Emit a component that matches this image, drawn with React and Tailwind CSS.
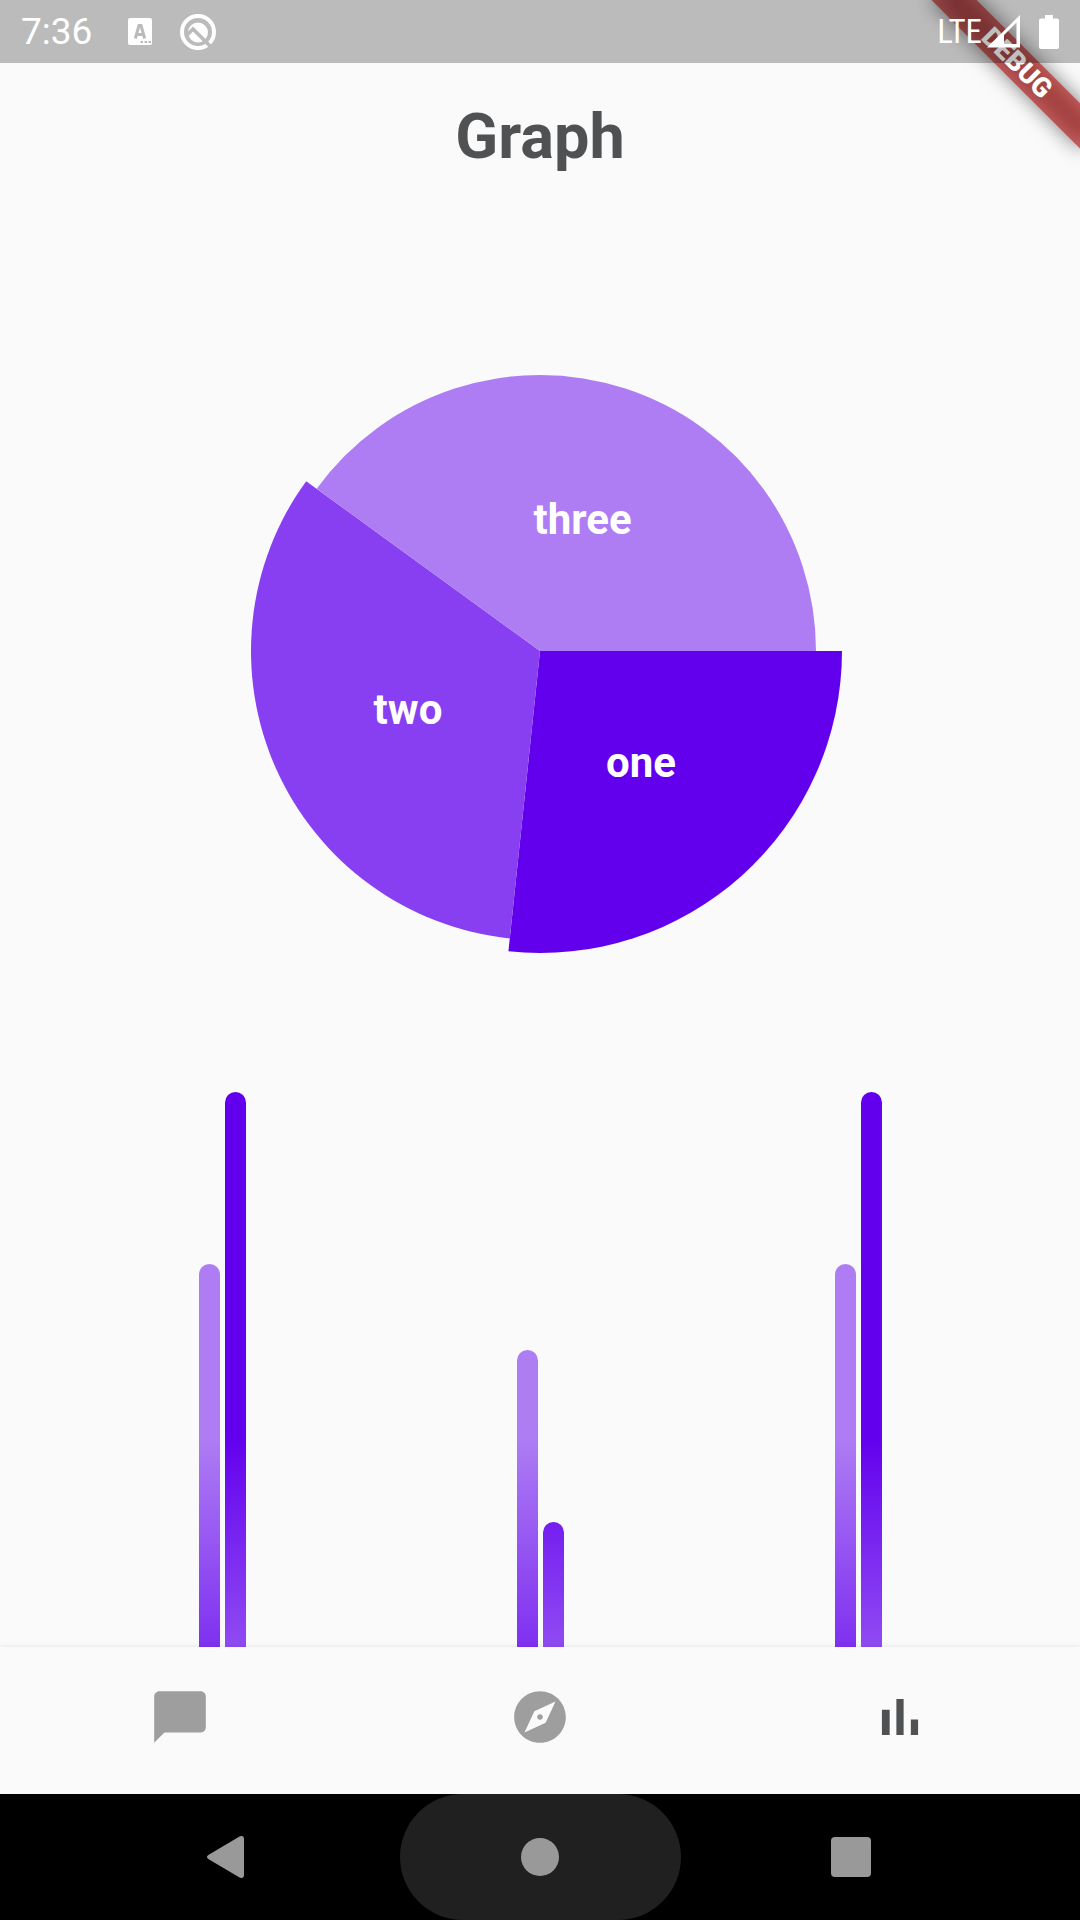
import React from "react";

const slices = [
  { label: "one", radius: 302, start: 0, end: 96, color: "#6200ee" },
  { label: "two", radius: 289, start: 96, end: 216, color: "#883ff1" },
  { label: "three", radius: 276, start: 216, end: 360, color: "#ae7df4" },
];

const groups = [
  { light: 383, dark: 555 },
  { light: 297, dark: 125 },
  { light: 383, dark: 555 },
];

const point = (radius, degrees) => [
  302 + radius * Math.cos((degrees * Math.PI) / 180),
  302 + radius * Math.sin((degrees * Math.PI) / 180),
];

function DebugBanner() {
  return (
    <div className="absolute top-[47px] right-[-42px] h-8 w-[210px] rotate-45">
      <div className="absolute inset-0 bg-black/50 blur-[10px]" />
      <div className="absolute inset-0 flex items-center justify-center bg-[#b71c1c]/63 text-[27px] leading-8 font-black text-white">
        DEBUG
      </div>
    </div>
  );
}

function StatusBar() {
  return (
    <header className="relative flex h-[63px] items-center bg-black/25 px-[21px] text-white">
      <span className="text-[37px] leading-[44px]">7:36</span>
      <svg className="ml-9 h-[27px] w-6" viewBox="0 0 24 27" aria-hidden="true">
        <rect width="24" height="27" rx="2" fill="#fff" />
        <path d="M7.300 20.500 11 7.500h2L16.700 20.500M8.500 16.500h7" fill="none" stroke="#bbb" strokeWidth="3" />
        <path d="M12.500 23h2.500v2h-2.500zM16.500 23H19v2h-2.500zM20.500 23H23v2h-2.500z" fill="#bbb" />
      </svg>
      <svg className="ml-[27px] h-[38px] w-[38px]" viewBox="0 0 38 38" aria-hidden="true">
        <circle cx="19" cy="19" r="16" fill="none" stroke="#fff" strokeWidth="4" />
        <circle cx="19" cy="19.500" r="10" fill="#fff" />
        <path d="M7 23l7-7 18 18" fill="none" stroke="#bbb" strokeWidth="3.600" />
      </svg>
      <span className="ml-auto text-[33px] leading-[40px] font-['Roboto_Condensed',Roboto,sans-serif]">LTE</span>
      <svg className="ml-[5px] h-[33px] w-[33px]" viewBox="0 0 33 33" aria-hidden="true">
        <path fillRule="evenodd" d="M0 32.500 33 0v32.500zM17 20v9h12.500V7.500z" fill="#fff" />
      </svg>
      <svg className="ml-[19px] h-[34px] w-5" viewBox="0 0 20 34" aria-hidden="true">
        <path d="M6 0h8v3.500h4a2 2 0 0 1 2 2V32a2 2 0 0 1-2 2H2a2 2 0 0 1-2-2V5.500a2 2 0 0 1 2-2h4z" fill="#fff" />
      </svg>
    </header>
  );
}

function PieChart() {
  return (
    <svg className="mx-auto mt-[175px] h-[604px] w-[604px] shrink-0" viewBox="0 0 604 604" role="img" aria-label="Pie chart">
      {slices.map(({ label, radius, start, end, color }) => {
        const [x1, y1] = point(radius, start);
        const [x2, y2] = point(radius, end);
        return (
          <path key={label} d={`M302 302L${x1} ${y1}A${radius} ${radius} 0 0 1 ${x2} ${y2}Z`} fill={color} />
        );
      })}
      {slices.map(({ label, radius, start, end }) => {
        const [x, y] = point(radius / 2, (start + end) / 2);
        return (
          <text key={label} x={x} y={y + 14} textAnchor="middle" className="fill-white text-[42px] font-bold">
            {label}
          </text>
        );
      })}
    </svg>
  );
}

function BarChart() {
  return (
    <section aria-label="Bar chart" className="grid flex-1 grid-cols-3 items-end px-[63px]">
      {groups.map((group, index) => (
        <div key={index} className="flex items-end justify-center gap-[5px]">
          <div
            className="w-[21px] rounded-t-full bg-[linear-gradient(to_top,#7f30f0,#ae7df4_210px)]"
            style={{ height: group.light }}
          />
          <div
            className="w-[21px] rounded-t-full bg-[linear-gradient(to_top,#904bf2,#6200ee_210px)]"
            style={{ height: group.dark }}
          />
        </div>
      ))}
    </section>
  );
}

function TabBar() {
  const icon = "h-[62px] w-[62px] fill-current";
  return (
    <nav className="relative grid h-[147px] grid-cols-3 bg-[#fafafa] pb-2 text-[#9e9e9e] shadow-[0_0_6px_rgba(0,0,0,0.1)]">
      <button type="button" aria-label="Chat" className="flex items-center justify-center">
        <svg className={icon} viewBox="0 0 24 24">
          <path d="M20 2H4c-1.100 0-2 .9-2 2v18l4-4h14c1.100 0 2-.9 2-2V4c0-1.100-.9-2-2-2z" />
        </svg>
      </button>
      <button type="button" aria-label="Explore" className="flex items-center justify-center">
        <svg className={icon} viewBox="0 0 24 24">
          <path d="M12 10.900c-.61 0-1.100.49-1.100 1.100s.49 1.100 1.100 1.100c.61 0 1.100-.49 1.100-1.100s-.49-1.100-1.100-1.100zM12 2C6.480 2 2 6.480 2 12s4.480 10 10 10 10-4.480 10-10S17.520 2 12 2zm2.190 12.190L6 18l3.810-8.190L18 6l-3.810 8.190z" />
        </svg>
      </button>
      <button type="button" aria-label="Graph" aria-current="page" className="flex items-center justify-center text-[#505153]">
        <svg className={icon} viewBox="0 0 24 24">
          <path d="M5 9.200h3V19H5zM10.600 5h2.800v14h-2.800zm5.600 8H19v6h-2.800z" />
        </svg>
      </button>
    </nav>
  );
}

function SystemBar() {
  return (
    <nav className="relative flex h-[126px] items-center justify-center gap-[30px] bg-black text-[#999]">
      <button type="button" aria-label="Back" className="flex h-full w-[281px] items-center justify-center pr-2">
        <svg className="h-[42px] w-[37px]" viewBox="0 0 37 42" fill="currentColor">
          <path d="M1.300 18.900 32.500.5Q37-1.300 37 3v36q0 4.300-4.500 2.500L1.300 23.100Q-1.300 21 1.300 18.900z" />
        </svg>
      </button>
      <button type="button" aria-label="Home" className="flex h-full w-[281px] items-center justify-center rounded-full bg-[#202020]">
        <span className="h-[38px] w-[38px] rounded-full bg-current" />
      </button>
      <button type="button" aria-label="Overview" className="flex h-full w-[281px] items-center justify-center">
        <span className="h-10 w-10 rounded-[4px] bg-current" />
      </button>
    </nav>
  );
}

export default function App() {
  return (
    <div className="relative flex min-h-screen flex-col overflow-hidden bg-[#fafafa] font-[Roboto,sans-serif]">
      <DebugBanner />
      <StatusBar />
      <main className="flex flex-1 flex-col">
        <h1 className="mt-[37px] text-center text-[63px] leading-[74px] font-bold text-[#505153]">Graph</h1>
        <PieChart />
        <BarChart />
      </main>
      <TabBar />
      <SystemBar />
    </div>
  );
}
